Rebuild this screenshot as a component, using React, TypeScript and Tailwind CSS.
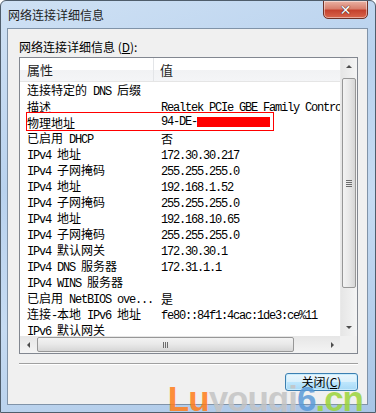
import React from 'react';

const rows: [string, string][] = [
  ['连接特定的 DNS 后缀', ''],
  ['描述', 'Realtek PCIe GBE Family Controller'],
  ['物理地址', 'MAC'],
  ['已启用 DHCP', '否'],
  ['IPv4 地址', '172.30.30.217'],
  ['IPv4 子网掩码', '255.255.255.0'],
  ['IPv4 地址', '192.168.1.52'],
  ['IPv4 子网掩码', '255.255.255.0'],
  ['IPv4 地址', '192.168.10.65'],
  ['IPv4 子网掩码', '255.255.255.0'],
  ['IPv4 默认网关', '172.30.30.1'],
  ['IPv4 DNS 服务器', '172.31.1.1'],
  ['IPv4 WINS 服务器', ''],
  ['已启用 NetBIOS ove...', '是'],
  ['连接-本地 IPv6 地址', 'fe80::84f1:4cac:1de3:ce%11'],
  ['IPv6 默认网关', ''],
];

// SimSun style: latin runs are half width, CJK runs full width
const Mixed = ({ text }: { text: string }) => {
  const parts = text.match(/[\u3000-\u9fff\uff00-\uffef]+|[^\u3000-\u9fff\uff00-\uffef]+/g) || [];
  return (
    <>
      {parts.map((p, i) =>
        /[\u3000-\u9fff]/.test(p) ? (
          <span key={i} className="font-['Noto_Sans_CJK_SC',sans-serif] text-[12px]">{p}</span>
        ) : (
          <span key={i} className="font-['Liberation_Mono',monospace] text-[12px] tracking-[-1.2px] whitespace-pre">{p}</span>
        )
      )}
    </>
  );
};

const Arrow = ({ dir }: { dir: 'up' | 'down' | 'left' | 'right' }) => {
  const pts = {
    up: '1,5 4,2 7,5',
    down: '1,2 4,5 7,2',
    left: '5,1 2,4 5,7',
    right: '3,1 6,4 3,7',
  }[dir];
  return (
    <svg width="8" height="8" viewBox="0 0 8 8">
      <polygon points={pts} fill="#4d4d4d" />
    </svg>
  );
};

const App = () => {
  return (
    <div className="relative w-[376px] h-[413px] overflow-hidden rounded-t-[6px] border border-[#4f5d6b] bg-[linear-gradient(160deg,#cfe1f4_0%,#b9d2ee_35%,#c6dbf2_60%,#a8c5e6_100%)] font-['Noto_Sans_CJK_SC',sans-serif]">
      {/* title bar */}
      <div className="h-[27px] flex items-center pl-[7px] text-[12px] text-[#1e1e1e]">
        网络连接详细信息
      </div>
      <div className="absolute top-[-1px] right-[7px] w-[45px] h-[19px] rounded-b-[5px] border border-[#6e3228] bg-[linear-gradient(#eab2a4_0%,#d8806e_45%,#c5422e_55%,#d9664c_100%)] flex items-center justify-center shadow-[inset_0_0_0_1px_rgba(255,255,255,0.45)]">
        <span className="text-white text-[14px] font-bold leading-none font-['DejaVu_Sans',sans-serif] [text-shadow:0_0_1px_#3a1a14,0_0_1px_#3a1a14]">✕</span>
      </div>

      {/* client area */}
      <div className="ml-[6px] mr-[7px] h-[377px] border border-[#8093a8] bg-[#f0f0f0] pl-[11px] pr-[9px]">
        <div className="pt-[10px] h-[27px] text-[12px] leading-[16px] text-black">
          网络连接详细信息 (<span className="underline">D</span>):
        </div>

        {/* list view */}
        <div className="mt-[1px] w-[339px] h-[297px] border border-[#828790] bg-white flex flex-col">
          <div className="flex h-[278px]">
            <div className="relative flex-1 min-w-0 overflow-hidden">
              <div className="flex h-[24px] bg-[linear-gradient(#ffffff_0%,#ffffff_50%,#f1f2f4_51%,#f4f5f7_100%)] border-b border-[#e5e5e5] text-[13px] text-[#1e1e1e]">
                <div className="w-[134px] shrink-0 border-r border-[#e3e5e8] pl-[7px] flex items-center">属性</div>
                <div className="flex-1 pl-[6px] flex items-center">值</div>
              </div>
              <div>
                {rows.map(([k, v], i) => (
                  <div key={i} className="flex h-[16px] items-center text-black leading-[16px] whitespace-nowrap">
                    <div className="w-[134px] shrink-0 pl-[7px] overflow-hidden"><Mixed text={k} /></div>
                    <div className="pl-[7px] shrink-0">
                      {v === 'MAC' ? (
                        <span className="flex items-center">
                          <Mixed text="94-DE-" />
                          <span className="inline-block w-[73px] h-[10px] bg-[#ff0000]" />
                        </span>
                      ) : (
                        <Mixed text={v} />
                      )}
                    </div>
                  </div>
                ))}
              </div>
              <div className="absolute left-[6px] top-[54px] w-[248px] h-[19px] border border-[#ff0000]" />
            </div>

            {/* vertical scrollbar */}
            <div className="w-[17px] shrink-0 flex flex-col bg-[linear-gradient(90deg,#e6e6e6,#f4f4f4)] border-l border-[#eaeaea]">
              <div className="h-[17px] flex items-center justify-center"><Arrow dir="up" /></div>
              <div className="flex-1 px-[1px]">
                <div className="mt-[3px] h-[210px] rounded-[2px] border border-[#979797] bg-[linear-gradient(90deg,#f3f3f3,#e8e8e8_50%,#d6d6d6)] flex items-center justify-center">
                  <div className="flex flex-col gap-[1px]">
                    <div className="w-[6px] h-[1px] bg-[#6d6d6d]" />
                    <div className="w-[6px] h-[1px] bg-[#6d6d6d]" />
                    <div className="w-[6px] h-[1px] bg-[#6d6d6d]" />
                    <div className="w-[6px] h-[1px] bg-[#6d6d6d]" />
                  </div>
                </div>
              </div>
              <div className="h-[17px] flex items-center justify-center"><Arrow dir="down" /></div>
            </div>
          </div>

          {/* horizontal scrollbar */}
          <div className="flex h-[17px]">
            <div className="flex-1 flex bg-[linear-gradient(#e6e6e6,#f4f4f4)]">
              <div className="w-[17px] flex items-center justify-center"><Arrow dir="left" /></div>
              <div className="py-[1px] w-[257px]">
                <div className="h-full rounded-[2px] border border-[#979797] bg-[linear-gradient(#f3f3f3,#e8e8e8_50%,#d6d6d6)] flex items-center justify-center">
                  <div className="flex gap-[1px]">
                    <div className="w-[1px] h-[6px] bg-[#6d6d6d]" />
                    <div className="w-[1px] h-[6px] bg-[#6d6d6d]" />
                    <div className="w-[1px] h-[6px] bg-[#6d6d6d]" />
                  </div>
                </div>
              </div>
              <div className="flex-1" />
              <div className="w-[17px] flex items-center justify-center"><Arrow dir="right" /></div>
            </div>
            <div className="w-[17px] bg-[#f0f0f0]" />
          </div>
        </div>

        {/* separator */}
        <div className="mt-[9px] w-[339px] h-[2px] border-t border-[#a0a0a0] border-b border-b-white" />

        {/* button */}
        <div className="mt-[8px] w-[339px] flex justify-end">
          <button className="w-[73px] h-[18px] rounded-[3px] border border-[#3c7fb1] bg-[linear-gradient(#eaf6fd_0%,#d9f0fc_50%,#bee6fd_51%,#a7d9f5_100%)] shadow-[inset_0_0_0_1px_#c8ecfd] text-[12px] leading-[16px] text-black">
            关闭(<span className="underline">C</span>)
          </button>
        </div>
      </div>

      {/* watermark */}
      <div className="absolute right-[12px] bottom-[-4px] text-[35px] font-black tracking-[-1px] leading-none font-['Liberation_Sans',sans-serif] opacity-85 pointer-events-none">
        <span className="text-[#ff7d1a]">Lu</span>
        <span className="text-[#c4c4c4]">youqi</span>
        <span className="text-[#5b9ad8]">6</span>
        <span className="text-[#9ad43a]">.cn</span>
      </div>
    </div>
  );
};

export default App;
